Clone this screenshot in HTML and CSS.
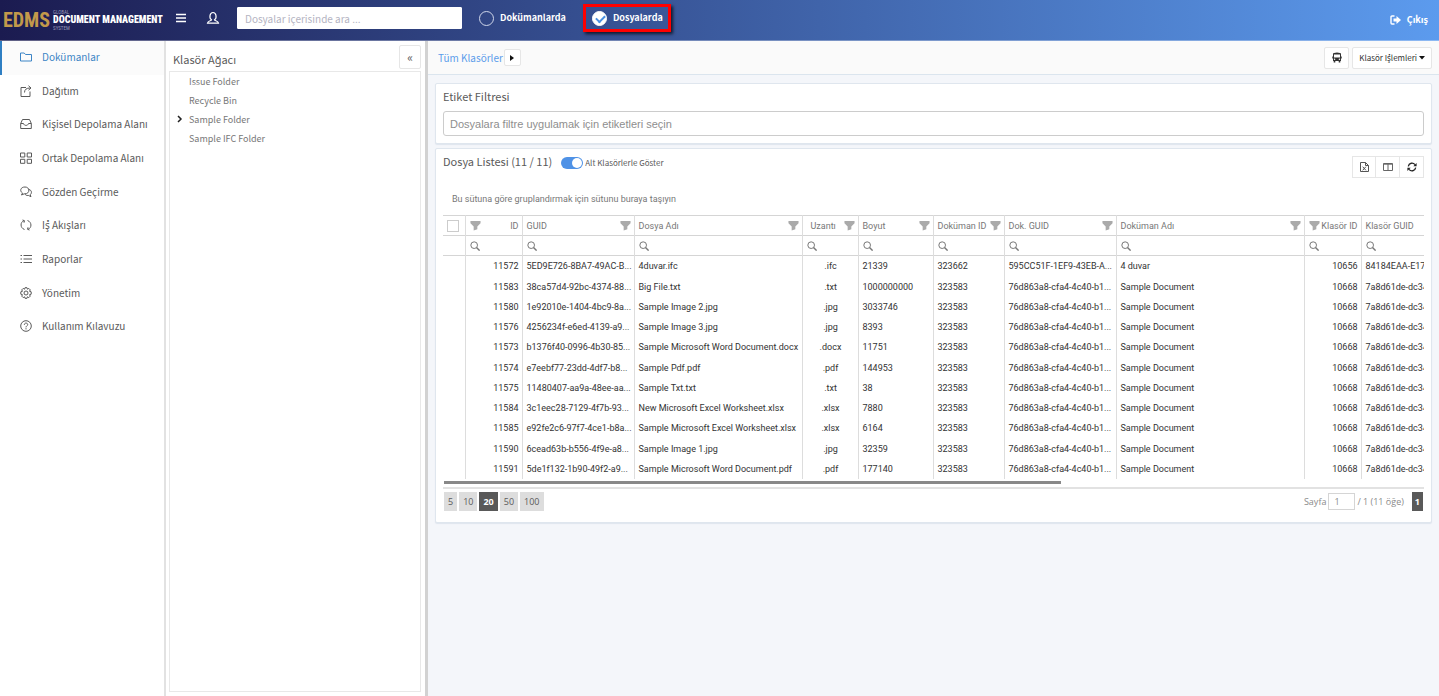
FILE: index.html
```html
<!DOCTYPE html>
<html lang="tr">
<head>
    <meta charset="UTF-8">
    <meta name="viewport" content="width=device-width, initial-scale=1.0">
    <title>EDMS Document Management</title>
    <link rel="stylesheet" href="styles.css">
</head>
<body>
    <svg class="sprite" aria-hidden="true">
        <symbol id="i-filter" viewBox="0 0 12 12"><path d="M.5 1h11v2.500L8 7V10L4 11.500V7L.5 3.500z" fill="currentColor"/></symbol>
        <symbol id="i-search" viewBox="0 0 12 12"><circle cx="5" cy="5" r="4" fill="none" stroke="currentColor" stroke-width="1.200"/><path d="M7.800 7.800L11.500 11.500" stroke="currentColor" stroke-width="1.700"/></symbol>
    </svg>

    <header class="topbar">
        <a class="logo" href="#">
            <span class="logo-main">EDMS</span>
            <span class="logo-text"><small>GLOBAL</small><b>DOCUMENT MANAGEMENT</b><small>SYSTEM</small></span>
        </a>
        <button class="top-btn menu-btn" aria-label="Menü">
            <svg width="12" height="12" viewBox="0 0 12 12"><path d="M1 2.500h10M1 6h10M1 9.500h10" stroke="#fff" stroke-width="1.500"/></svg>
        </button>
        <button class="top-btn user-btn" aria-label="Kullanıcı">
            <svg width="14" height="14" viewBox="0 0 14 14" fill="none" stroke="#fff" stroke-width="1.200"><path d="M5.500 8.800C3 7.500 3.500 1.500 7 1.500s4 6 1.500 7.300c.3 1.200 3.500.700 4 3.400H1.500c.5-2.700 3.700-2.200 4-3.400z"/></svg>
        </button>
        <input class="top-search" type="text" placeholder="Dosyalar içerisinde ara ..." aria-label="Ara">
        <label class="scope"><input type="radio" name="scope">Dokümanlarda</label>
        <label class="scope scope-active"><input type="radio" name="scope" checked>Dosyalarda</label>
        <a class="logout" href="#">
            <svg width="11" height="10" viewBox="0 0 11 10"><path d="M4.500 1H2Q1 1 1 2v6q0 1 1 1h2.500" fill="none" stroke="#fff" stroke-width="1.400"/><path d="M3.500 3.500h3V1L11 5 6.500 9V6.500h-3z" fill="#fff"/></svg>
            Çıkış
        </a>
    </header>

    <div class="layout">
        <nav class="sidebar">
            <ul>
                <li class="active"><a href="#"><svg viewBox="0 0 12 12"><path d="M.5 10V2h3.700l1.300 1.500h6V10z"/></svg>Dokümanlar</a></li>
                <li><a href="#"><svg viewBox="0 0 12 12"><path d="M6 2.500H1v9h9V6.500M4.500 7.500C4.500 4.500 6.500 3 10 3M8.500.7L11 3 8.500 5.200"/></svg>Dağıtım</a></li>
                <li><a href="#"><svg viewBox="0 0 12 12"><path d="M.7 5.500L2.500 1.500h7l1.800 4v5H.7zM.7 5.500H3.500C4 8 8 8 8.500 5.500h2.800"/></svg>Kişisel Depolama Alanı</a></li>
                <li><a href="#"><svg viewBox="0 0 12 12"><path d="M.5 1h4.300v4H.5zM7.200 1h4.300v4H7.200zM.5 7.300h4.300v4H.5zM7.200 7.300h4.300v4H7.200z"/></svg>Ortak Depolama Alanı</a></li>
                <li><a href="#"><svg viewBox="0 0 12 12"><path d="M2.500 7L1.500 9l2.800-1.200C10 8.500 10.500 1 5 1 .3 1-.5 5.200 2.500 7zM9 3.500c3 .7 3 4 1.200 5.200l.8 2-2.700-1.300C6.500 9.800 5.500 9 5 8"/></svg>Gözden Geçirme</a></li>
                <li><a href="#"><svg viewBox="0 0 12 12"><path d="M4.500 10.500C0 9 0 3 4 1.700M2.500 1l2 .7-.5 2M7.500 1.500C12 3 12 9 8 10.300M9.500 11l-2-.7.5-2"/></svg>İş Akışları</a></li>
                <li><a href="#"><svg viewBox="0 0 12 12"><path d="M3.500 2.500H12M3.500 6H12M3.500 9.500H12M.5 2.500H2M.5 6H2M.5 9.500H2"/></svg>Raporlar</a></li>
                <li><a href="#"><svg viewBox="0 0 12 12"><path d="M5 .7h2l.4 1.500 1.400-.8 1.500 1.500-.8 1.400 1.700.5v2.400l-1.700.5.8 1.400-1.500 1.500-1.400-.8-.4 1.500H5l-.4-1.500-1.400.8-1.500-1.500.8-1.400L.8 7.200V4.800l1.700-.5-.8-1.400 1.500-1.500 1.400.8z"/><circle cx="6" cy="6" r="2"/></svg>Yönetim</a></li>
                <li><a href="#"><svg viewBox="0 0 12 12"><circle cx="6" cy="6" r="5.300"/><path d="M4.300 4.800C4.300 2.500 7.700 2.600 7.700 4.600 7.700 5.900 6 5.800 6 7.400M6 8.200v1.200"/></svg>Kullanım Kılavuzu</a></li>
            </ul>
        </nav>

        <aside class="tree-panel">
            <div class="tree-head">
                <h2>Klasör Ağacı</h2>
                <button class="btn collapse-btn" aria-label="Daralt">«</button>
            </div>
            <ul class="tree">
                <li>Issue Folder</li>
                <li>Recycle Bin</li>
                <li><svg class="caret" width="6" height="8" viewBox="0 0 6 8"><path d="M1 1l3 3-3 3" fill="none" stroke="#222" stroke-width="1.500"/></svg>Sample Folder</li>
                <li>Sample IFC Folder</li>
            </ul>
        </aside>

        <main class="content">
            <div class="pathbar">
                <a href="#">Tüm Klasörler</a>
                <button class="btn path-btn" aria-label="Alt klasörler"><svg width="4" height="6" viewBox="0 0 4 6"><path d="M0 0l4 3-4 3z" fill="#111"/></svg></button>
                <button class="btn bus-btn" aria-label="Transfer">
                    <svg width="10" height="11" viewBox="0 0 10 11"><path d="M1 2Q1 .5 5 .5T9 2v2.500h.7v2H9V9H8.300v1.500H6.700V9H3.300v1.500H1.700V9H1V6.500H.3v-2H1z" fill="#333"/><path d="M2 2.500h6v3H2z" fill="#fff"/><circle cx="2.600" cy="7.300" r=".7" fill="#fff"/><circle cx="7.400" cy="7.300" r=".7" fill="#fff"/></svg>
                </button>
                <button class="btn actions-btn">Klasör İşlemleri <svg width="6" height="4" viewBox="0 0 6 4"><path d="M0 0h6L3 3.500z" fill="#111"/></svg></button>
            </div>

            <section class="card">
                <h2><label for="tags">Etiket Filtresi</label></h2>
                <input id="tags" class="tag-input" type="text" placeholder="Dosyalara filtre uygulamak için etiketleri seçin">
            </section>

            <section class="card list-card">
                <div class="list-head">
                    <h2>Dosya Listesi (11 / 11)</h2>
                    <label class="switch"><input type="checkbox" checked>Alt Klasörlerle Göster</label>
                    <div class="tools">
                        <button class="btn" aria-label="Excel"><svg width="9" height="10" viewBox="0 0 9 10" fill="none" stroke="#555"><path d="M.5.5h5L8.500 3.500v6h-8zM5.500.5v3h3M2.700 4.700l3.200 3.600M5.900 4.700L2.700 8.300"/></svg></button>
                        <button class="btn" aria-label="Sütunlar"><svg width="10" height="8" viewBox="0 0 10 8" fill="none" stroke="#666"><path d="M.5.5h9v7h-9zM5 1v6.500M.5 1.200h9"/></svg></button>
                        <button class="btn" aria-label="Yenile"><svg width="10" height="10" viewBox="0 0 10 10"><path d="M1.300 4.300C2 .7 6 .3 8 2.600M8.700 5.700C8 9.300 4 9.700 2 7.400" fill="none" stroke="#222" stroke-width="1.300"/><path d="M9.600.9v3.300H6.300zM.4 9.100V5.800h3.300z" fill="#222"/></svg></button>
                    </div>
                </div>
                <p class="group-hint">Bu sütuna göre gruplandırmak için sütunu buraya taşıyın</p>

                <div class="grid-scroll">
                    <table class="grid">
                        <colgroup>
                            <col class="w-check"><col class="w-id"><col class="w-guid"><col class="w-name"><col class="w-ext"><col class="w-size"><col class="w-docid"><col class="w-guid"><col class="w-doc"><col class="w-id"><col class="w-guid">
                        </colgroup>
                        <thead>
                            <tr>
                                <th><input type="checkbox" aria-label="Tümünü seç"></th>
                                <th><div class="th num"><svg><use href="#i-filter"/></svg><span>ID</span></div></th>
                                <th><div class="th"><span>GUID</span><svg><use href="#i-filter"/></svg></div></th>
                                <th><div class="th"><span>Dosya Adı</span><svg><use href="#i-filter"/></svg></div></th>
                                <th><div class="th mid"><span>Uzantı</span><svg><use href="#i-filter"/></svg></div></th>
                                <th><div class="th"><span>Boyut</span><svg><use href="#i-filter"/></svg></div></th>
                                <th><div class="th"><span>Doküman ID</span><svg><use href="#i-filter"/></svg></div></th>
                                <th><div class="th"><span>Dok. GUID</span><svg><use href="#i-filter"/></svg></div></th>
                                <th><div class="th"><span>Doküman Adı</span><svg><use href="#i-filter"/></svg></div></th>
                                <th><div class="th num"><svg><use href="#i-filter"/></svg><span>Klasör ID</span></div></th>
                                <th><div class="th"><span>Klasör GUID</span><svg><use href="#i-filter"/></svg></div></th>
                            </tr>
                            <tr class="filters">
                                <td></td>
                                <td><label><svg><use href="#i-search"/></svg><input type="text" aria-label="ID"></label></td>
                                <td><label><svg><use href="#i-search"/></svg><input type="text" aria-label="GUID"></label></td>
                                <td><label><svg><use href="#i-search"/></svg><input type="text" aria-label="Dosya Adı"></label></td>
                                <td><label><svg><use href="#i-search"/></svg><input type="text" aria-label="Uzantı"></label></td>
                                <td><label><svg><use href="#i-search"/></svg><input type="text" aria-label="Boyut"></label></td>
                                <td><label><svg><use href="#i-search"/></svg><input type="text" aria-label="Doküman ID"></label></td>
                                <td><label><svg><use href="#i-search"/></svg><input type="text" aria-label="Dok. GUID"></label></td>
                                <td><label><svg><use href="#i-search"/></svg><input type="text" aria-label="Doküman Adı"></label></td>
                                <td><label><svg><use href="#i-search"/></svg><input type="text" aria-label="Klasör ID"></label></td>
                                <td><label><svg><use href="#i-search"/></svg><input type="text" aria-label="Klasör GUID"></label></td>
                            </tr>
                        </thead>
                        <tbody>
                            <tr><td></td><td>11572</td><td>5ED9E726-8BA7-49AC-B...</td><td>4duvar.ifc</td><td>.ifc</td><td>21339</td><td>323662</td><td>595CC51F-1EF9-43EB-A...</td><td>4 duvar</td><td>10656</td><td>84184EAA-E17</td></tr>
                            <tr><td></td><td>11583</td><td>38ca57d4-92bc-4374-88...</td><td>Big File.txt</td><td>.txt</td><td>1000000000</td><td>323583</td><td>76d863a8-cfa4-4c40-b1...</td><td>Sample Document</td><td>10668</td><td>7a8d61de-dc34</td></tr>
                            <tr><td></td><td>11580</td><td>1e92010e-1404-4bc9-8a...</td><td>Sample Image 2.jpg</td><td>.jpg</td><td>3033746</td><td>323583</td><td>76d863a8-cfa4-4c40-b1...</td><td>Sample Document</td><td>10668</td><td>7a8d61de-dc34</td></tr>
                            <tr><td></td><td>11576</td><td>4256234f-e6ed-4139-a9...</td><td>Sample Image 3.jpg</td><td>.jpg</td><td>8393</td><td>323583</td><td>76d863a8-cfa4-4c40-b1...</td><td>Sample Document</td><td>10668</td><td>7a8d61de-dc34</td></tr>
                            <tr><td></td><td>11573</td><td>b1376f40-0996-4b30-85...</td><td>Sample Microsoft Word Document.docx</td><td>.docx</td><td>11751</td><td>323583</td><td>76d863a8-cfa4-4c40-b1...</td><td>Sample Document</td><td>10668</td><td>7a8d61de-dc34</td></tr>
                            <tr><td></td><td>11574</td><td>e7eebf77-23dd-4df7-b8...</td><td>Sample Pdf.pdf</td><td>.pdf</td><td>144953</td><td>323583</td><td>76d863a8-cfa4-4c40-b1...</td><td>Sample Document</td><td>10668</td><td>7a8d61de-dc34</td></tr>
                            <tr><td></td><td>11575</td><td>11480407-aa9a-48ee-aa...</td><td>Sample Txt.txt</td><td>.txt</td><td>38</td><td>323583</td><td>76d863a8-cfa4-4c40-b1...</td><td>Sample Document</td><td>10668</td><td>7a8d61de-dc34</td></tr>
                            <tr><td></td><td>11584</td><td>3c1eec28-7129-4f7b-93...</td><td>New Microsoft Excel Worksheet.xlsx</td><td>.xlsx</td><td>7880</td><td>323583</td><td>76d863a8-cfa4-4c40-b1...</td><td>Sample Document</td><td>10668</td><td>7a8d61de-dc34</td></tr>
                            <tr><td></td><td>11585</td><td>e92fe2c6-97f7-4ce1-b8a...</td><td>Sample Microsoft Excel Worksheet.xlsx</td><td>.xlsx</td><td>6164</td><td>323583</td><td>76d863a8-cfa4-4c40-b1...</td><td>Sample Document</td><td>10668</td><td>7a8d61de-dc34</td></tr>
                            <tr><td></td><td>11590</td><td>6cead63b-b556-4f9e-a8...</td><td>Sample Image 1.jpg</td><td>.jpg</td><td>32359</td><td>323583</td><td>76d863a8-cfa4-4c40-b1...</td><td>Sample Document</td><td>10668</td><td>7a8d61de-dc34</td></tr>
                            <tr><td></td><td>11591</td><td>5de1f132-1b90-49f2-a9...</td><td>Sample Microsoft Word Document.pdf</td><td>.pdf</td><td>177140</td><td>323583</td><td>76d863a8-cfa4-4c40-b1...</td><td>Sample Document</td><td>10668</td><td>7a8d61de-dc34</td></tr>
                        </tbody>
                    </table>
                </div>
                <div class="scrollbar"><div class="thumb"></div></div>

                <div class="pager">
                    <div class="sizes">
                        <button>5</button>
                        <button>10</button>
                        <button class="selected">20</button>
                        <button>50</button>
                        <button>100</button>
                    </div>
                    <div class="pages">
                        <label for="page">Sayfa</label>
                        <input id="page" type="text" value="1">
                        <span>/ 1 (11 öğe)</span>
                        <button class="selected">1</button>
                    </div>
                </div>
            </section>
        </main>
    </div>
</body>
</html>
```
FILE: styles.css
```css
* {
    box-sizing: border-box;
}

body {
    display: flex;
    flex-direction: column;
    min-height: 100vh;
    margin: 0;
    background-color: #f4f6fa;
    color: #5a5a5a;
    font-family: "Noto Sans CJK SC", "Noto Sans", sans-serif;
    font-size: 10px;
    line-height: 16px;
}

button, input {
    font: inherit;
    color: inherit;
    margin: 0;
}

button {
    cursor: pointer;
}

a {
    color: inherit;
    text-decoration: none;
}

ul {
    list-style: none;
    margin: 0;
    padding: 0;
}

h2 {
    margin: 0;
    font-size: 11px;
    font-weight: 400;
}

.sprite {
    display: none;
}

/* top bar */
.topbar {
    display: flex;
    align-items: center;
    height: 41px;
    padding: 0 11px 4px 3px;
    background: linear-gradient(90deg, #1b1b50, #5c9bee);
    border-bottom: 1px solid rgba(255, 255, 255, 0.3);
    color: #fff;
    font-size: 9px;
    font-weight: 700;
}

.logo {
    display: flex;
    align-items: center;
    gap: 3px;
    width: 170px;
    padding-top: 4px;
    font-family: "Roboto Condensed", "Liberation Sans Narrow", "Noto Sans CJK SC", sans-serif;
    white-space: nowrap;
}

.logo-main {
    color: #c2994b;
    font-size: 20px;
    line-height: 24px;
}

.logo-text {
    display: flex;
    flex-direction: column;
    line-height: 10px;
}

.logo-text b {
    font-size: 10px;
}

.logo-text small {
    color: #9a9ab8;
    font-size: 5px;
    font-weight: 400;
    line-height: 6px;
}

.top-btn {
    display: flex;
    padding: 2px;
    border: 0;
    background: none;
}

.user-btn {
    margin-left: 15px;
}

.top-search {
    width: 225px;
    height: 22px;
    margin-left: 15px;
    padding: 0 7px;
    border: 1px solid #fff;
    border-radius: 1px;
    background: #fff;
    font-size: 10px;
    font-weight: 400;
    color: #555;
}

.top-search::placeholder {
    color: #b4b4c2;
    opacity: 1;
}

.scope {
    display: flex;
    align-items: center;
    gap: 6px;
    margin-left: 17px;
}

.scope input {
    appearance: none;
    width: 15px;
    height: 15px;
    border: 1px solid #cfd6ea;
    border-radius: 50%;
}

.scope input:checked {
    border-color: #fff;
    background: #fff;
}

.scope input:checked::before {
    content: "";
    display: block;
    width: 7px;
    height: 4px;
    margin: 3px;
    border: solid #4a90e2;
    border-width: 0 0 2px 2px;
    transform: rotate(-45deg);
}

.scope-active {
    height: 28px;
    padding: 0 5px 0 6px;
    border: 3px solid #f00;
    box-shadow: 2px 2px 3px rgba(0, 0, 0, 0.7);
}

.logout {
    display: flex;
    align-items: center;
    gap: 6px;
    margin-left: auto;
    padding-top: 4px;
}

/* sidebar */
.layout {
    display: flex;
    flex: 1;
}

.sidebar {
    width: 166px;
    background: #fff;
    border-right: 2px solid #e2e2e2;
}

.sidebar ul {
    display: flex;
    flex-direction: column;
    height: 303px;
}

.sidebar li {
    display: flex;
    flex: 1;
    border-left: 2px solid transparent;
}

.sidebar li.active {
    background: #fbfbfb;
    border-left-color: #2f7fc3;
    color: #3d85c6;
}

.sidebar a {
    display: flex;
    align-items: center;
    gap: 10px;
    padding: 0 0 2px 18px;
    white-space: nowrap;
}

.sidebar svg {
    width: 12px;
    height: 12px;
    fill: none;
    stroke: currentColor;
}

/* folder tree */
.tree-panel {
    display: flex;
    flex-direction: column;
    width: 262px;
    padding: 4px 4px 4px 3px;
    background: #fff;
    border-right: 3px solid #d2d2d2;
}

.tree-head {
    display: flex;
    align-items: center;
    justify-content: space-between;
    margin-bottom: 2px;
}

.tree-head h2 {
    padding: 4px 0 0 4px;
}

.btn {
    display: flex;
    align-items: center;
    justify-content: center;
    padding: 0;
    border: 1px solid #e6e6e6;
    border-radius: 2px;
    background: #fff;
}

.collapse-btn {
    width: 22px;
    height: 24px;
    font-size: 12px;
}

.tree {
    flex: 1;
    border: 1px solid #e8e8e8;
    color: #777;
    font-size: 9px;
}

.tree li {
    position: relative;
    height: 19px;
    padding-left: 19px;
    line-height: 19px;
}

.caret {
    position: absolute;
    left: 7px;
    top: 5px;
}

/* content */
.content {
    flex: 1;
    min-width: 0;
}

.pathbar {
    display: flex;
    align-items: center;
    height: 34px;
    padding: 0 7px 0 10px;
    background: #fafafa;
    border-bottom: 1px solid #dbe5ee;
}

.pathbar a {
    color: #5a9cea;
}

.path-btn {
    width: 17px;
    height: 17px;
    margin-left: 1px;
}

.bus-btn {
    width: 25px;
    height: 22px;
    margin-left: auto;
}

.actions-btn {
    gap: 2px;
    height: 22px;
    margin-left: 3px;
    padding: 0 6px;
    font-size: 8px;
    color: #333;
}

.card {
    margin: 8px 7px 0;
    padding: 4px 7px 7px;
    background: #fff;
    border: 1px solid #dfe6ee;
    border-radius: 2px;
    box-shadow: 0 1px 1px #dfe6ee;
}

.card h2 {
    line-height: 17px;
}

.tag-input {
    display: block;
    width: 100%;
    height: 25px;
    margin-top: 6px;
    padding: 0 6px;
    border: 1px solid #ccc;
    border-radius: 3px;
    font-family: "Liberation Sans", Arial, sans-serif;
    font-size: 11px;
}

.tag-input::placeholder {
    color: #8e8e8e;
    opacity: 1;
}

.list-card {
    margin-top: 4px;
    padding-bottom: 11px;
}

.list-head {
    display: flex;
    align-items: flex-start;
}

.switch {
    display: flex;
    align-items: center;
    gap: 2px;
    margin-left: 9px;
    font-size: 8px;
    line-height: 19px;
}

.switch input {
    appearance: none;
    display: flex;
    justify-content: flex-end;
    width: 22px;
    height: 12px;
    padding: 1px;
    border-radius: 6px;
    background: #4f92e6;
}

.switch input::before {
    content: "";
    width: 10px;
    height: 10px;
    border-radius: 50%;
    background: #fff;
}

.tools {
    display: flex;
    margin: 3px 0 0 auto;
}

.tools .btn {
    width: 24px;
    height: 22px;
    border-radius: 0;
}

.tools .btn + .btn {
    border-left: 0;
}

.group-hint {
    margin: 13px 0 8px 9px;
    font-family: Roboto, "Open Sans", sans-serif;
    font-size: 9px;
    line-height: 16px;
    color: #777;
}

/* file grid */
.grid-scroll {
    overflow: hidden;
    font-family: Roboto, "Open Sans", sans-serif;
    font-size: 9px;
}

.grid {
    width: 1029px;
    height: 264px;
    table-layout: fixed;
    border-collapse: collapse;
    line-height: 12px;
    color: #333;
}

.w-check { width: 22px; }
.w-id { width: 57px; }
.w-guid { width: 112px; }
.w-name { width: 168px; }
.w-ext { width: 56px; }
.w-size { width: 75px; }
.w-docid { width: 71px; }
.w-doc { width: 188px; }

.grid th, .grid td {
    padding: 0 3px 0 4px;
    overflow: hidden;
    white-space: nowrap;
    border-left: 1px solid #ddd;
}

.grid th:first-child, .grid td:first-child {
    border-left: 0;
}

.grid thead tr {
    height: 20px;
    border: solid #d5d5d5;
    border-width: 1px 0;
    color: #777;
}

.grid th {
    font-weight: 400;
    text-align: left;
}

.grid tbody td:nth-child(2), .grid tbody td:nth-child(10) {
    text-align: right;
}

.grid tbody td:nth-child(5) {
    text-align: center;
}

.th {
    display: flex;
    align-items: center;
    justify-content: space-between;
}

.th svg, .filters svg {
    flex: none;
    width: 11px;
    height: 11px;
    color: #aaa;
}

.filters svg {
    width: 10px;
    height: 10px;
    color: #777;
}

.th.mid {
    padding-left: 4px;
}

.filters label {
    display: flex;
    align-items: center;
}

.filters input {
    width: 100%;
    min-width: 0;
    height: 16px;
    padding: 0 2px;
    border: 0;
    background: none;
}

.grid th input {
    appearance: none;
    display: block;
    width: 12px;
    height: 12px;
    border: 1px solid #ccc;
    background: #fff;
}

.scrollbar {
    padding: 2px 1px 3px;
    border-bottom: 2px solid #e2e2e2;
}

.thumb {
    width: 63%;
    height: 3px;
    background: #888;
}

/* pager */
.pager {
    display: flex;
    justify-content: space-between;
    margin-top: 3px;
    font-family: "Open Sans", "Noto Sans", sans-serif;
    font-size: 9px;
}

.sizes, .pages {
    display: flex;
    align-items: center;
    gap: 2px;
}

.sizes {
    padding-left: 1px;
}

.pager button {
    height: 19px;
    padding: 0 4px;
    border: 0;
    background: #ddd;
}

.pager .selected {
    background: #595959;
    color: #fff;
    font-weight: 700;
}

.pages {
    padding-right: 1px;
    color: #8a8a8a;
}

.pages input {
    width: 27px;
    height: 17px;
    padding: 0 5px;
    border: 1px solid #d5d5d5;
}

.pages button {
    margin-left: 6px;
}

.pages .selected {
    padding: 0 3px;
}
```
